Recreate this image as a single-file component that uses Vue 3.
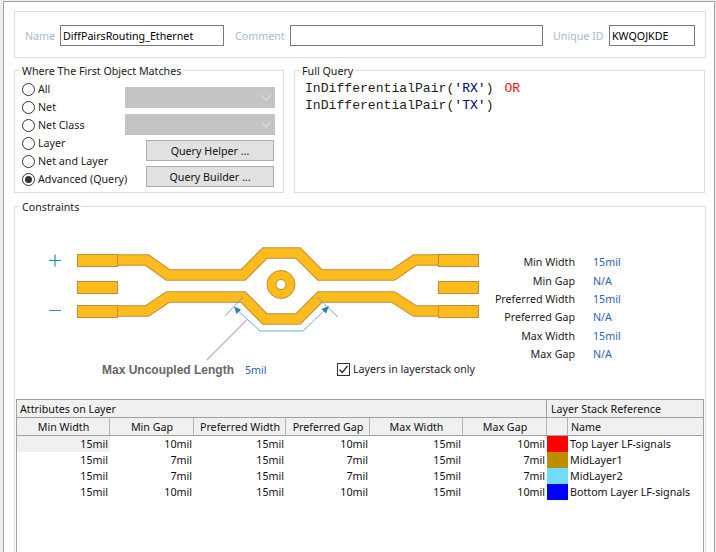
<script setup>
const radios = [
  { label: 'All' },
  { label: 'Net' },
  { label: 'Net Class' },
  { label: 'Layer' },
  { label: 'Net and Layer' },
  { label: 'Advanced (Query)', on: true }
]
const summary = [
  ['Min Width', '15mil'],
  ['Min Gap', 'N/A'],
  ['Preferred Width', '15mil'],
  ['Preferred Gap', 'N/A'],
  ['Max Width', '15mil'],
  ['Max Gap', 'N/A']
]
const columns = ['Min Width', 'Min Gap', 'Preferred Width', 'Preferred Gap', 'Max Width', 'Max Gap']
const rows = [
  { vals: ['15mil', '10mil', '15mil', '10mil', '15mil', '10mil'], color: '#ff0000', name: 'Top Layer LF-signals' },
  { vals: ['15mil', '7mil', '15mil', '7mil', '15mil', '7mil'], color: '#bc8e00', name: 'MidLayer1' },
  { vals: ['15mil', '7mil', '15mil', '7mil', '15mil', '7mil'], color: '#70dbfa', name: 'MidLayer2' },
  { vals: ['15mil', '10mil', '15mil', '10mil', '15mil', '10mil'], color: '#0000ff', name: 'Bottom Layer LF-signals' }
]
const topTrace = 'M118 260H147L168 275H243L265 253H298L320 275H393L415 260H440'
const botTrace = 'M118 311H147L168 297H243L265 319H298L320 297H393L415 311H440'
const pads = [
  [77, 254], [77, 281], [77, 305],
  [438, 254], [438, 281], [438, 305]
]
</script>

<template>
  <div class="window">
    <div class="inner">
      <div class="name-panel">
        <label class="lbl lbl-name">Name</label>
        <input class="field f-name" value="DiffPairsRouting_Ethernet" readonly />
        <label class="lbl lbl-comment">Comment</label>
        <input class="field f-comment" value="" readonly />
        <label class="lbl lbl-id">Unique ID</label>
        <input class="field f-id" value="KWQOJKDE" readonly />
      </div>

      <div class="query-row">
        <fieldset class="group where">
          <legend>Where The First Object Matches</legend>
          <div class="where-body">
            <div class="radios">
              <div v-for="r in radios" :key="r.label" class="radio-row">
                <span class="radio" :class="{ on: r.on }"></span>
                <span>{{ r.label }}</span>
              </div>
            </div>
            <div class="where-controls">
              <div class="combo">
                <svg width="12" height="7" viewBox="0 0 12 7"><path d="M1 1l5 5 5-5" fill="none" stroke="#d9d9d9" stroke-width="1.3" /></svg>
              </div>
              <div class="combo">
                <svg width="12" height="7" viewBox="0 0 12 7"><path d="M1 1l5 5 5-5" fill="none" stroke="#d9d9d9" stroke-width="1.3" /></svg>
              </div>
              <div class="btn first">Query Helper ...</div>
              <div class="btn">Query Builder ...</div>
            </div>
          </div>
        </fieldset>

        <fieldset class="group full">
          <legend>Full Query</legend>
          <div class="code">
            <div>InDifferentialPair(<span class="str">'RX'</span>) <span class="kw">OR</span></div>
            <div>InDifferentialPair(<span class="str">'TX'</span>)</div>
          </div>
        </fieldset>
      </div>

      <fieldset class="group constraints">
        <legend>Constraints</legend>
        <div class="diagram">
          <div class="diagram-left">
            <svg class="pcb" width="440" height="117" viewBox="40 245 440 117">
              <path d="M49 260.5H61M55 254.5V266.5M49 310.5H61" stroke="#2b8cbe" stroke-width="1.2" fill="none" />
              <g fill="none" stroke-linejoin="miter">
                <path :d="topTrace" stroke="#c08c3c" stroke-width="11.5" />
                <path :d="botTrace" stroke="#c08c3c" stroke-width="11.5" />
                <path :d="topTrace" stroke="#fdbb1c" stroke-width="9.5" />
                <path :d="botTrace" stroke="#fdbb1c" stroke-width="9.5" />
              </g>
              <rect v-for="p in pads" :key="p[0] + '-' + p[1]" :x="p[0] + 0.5" :y="p[1] + 0.5" width="40" height="12" fill="#fdbb1c" stroke="#c08c3c" />
              <circle cx="281" cy="284.5" r="14" fill="#fdbb1c" stroke="#c08c3c" />
              <circle cx="281" cy="284.5" r="5" fill="#fff" stroke="#c08c3c" />
              <g fill="none" stroke="#5aa6cc" stroke-width="0.9">
                <path d="M225 316L243 297M317 297L338 317" />
                <path d="M235 308L260 331H303L328 307" />
              </g>
              <path d="M234 306.5L241 309.5L236.5 314Z" fill="#2a7fae" />
              <path d="M329 306L326 313.5L321.5 309Z" fill="#2a7fae" />
              <path d="M246.7 320L206.7 360" stroke="#d0aadc" stroke-width="1.2" />
            </svg>
            <div class="length-row">
              <span class="length-label">Max Uncoupled Length</span>
              <span class="value length-value">5mil</span>
              <span class="check">
                <svg width="13" height="13" viewBox="0 0 13 13"><rect x="0.5" y="0.5" width="12" height="12" fill="#fff" stroke="#333" /><path d="M2.5 6.5L5.2 9.5L10.5 3" fill="none" stroke="#222" stroke-width="1.2" /></svg>
                <span>Layers in layerstack only</span>
              </span>
            </div>
          </div>
          <div class="summary">
            <template v-for="s in summary" :key="s[0]">
              <span class="s-label">{{ s[0] }}</span>
              <span class="value">{{ s[1] }}</span>
            </template>
          </div>
        </div>

        <div class="table">
          <div class="band">
            <div class="band-a">Attributes on Layer</div>
            <div class="band-b">Layer Stack Reference</div>
          </div>
          <div class="grid heads">
            <div v-for="c in columns" :key="c" class="head">{{ c }}</div>
            <div class="head"></div>
            <div class="head head-name">Name</div>
          </div>
          <div v-for="(r, i) in rows" :key="r.name" class="grid row">
            <div v-for="(v, j) in r.vals" :key="j" class="num" :class="{ sel: i === 0 && j === 0 }">{{ v }}</div>
            <div :style="{ background: r.color }"></div>
            <div class="layer-name">{{ r.name }}</div>
          </div>
        </div>
      </fieldset>
    </div>
  </div>
</template>

<style>
html, body { margin: 0; padding: 0; background: #f0f0f0; }
</style>

<style scoped>
.window {
  width: 716px;
  height: 552px;
  box-sizing: border-box;
  padding: 1px 1px 0 3px;
  background: #f0f0f0;
  overflow: hidden;
  font-family: "Noto Sans", "Open Sans", sans-serif;
  font-size: 10.7px;
  color: #1a1a1a;
}
.inner {
  height: 600px;
  box-sizing: border-box;
  border: 1px solid #a0a0a0;
  background: #fff;
  padding: 9px 8px 0 10px;
}
.name-panel {
  display: flex;
  align-items: center;
  height: 47px;
  box-sizing: border-box;
  border: 1px solid #dcdcdc;
  padding: 2px 0 0 10px;
}
.lbl { color: #a9b9cf; }
.lbl-name { width: 35px; }
.lbl-comment { width: 55px; margin-left: 11px; }
.lbl-id { width: 56px; margin-left: 10px; }
.field {
  box-sizing: border-box;
  height: 21px;
  border: 1px solid #7a7a7a;
  padding: 0 2px;
  font: inherit;
  color: #000;
  outline: none;
  background: #fff;
}
.f-name { width: 164px; }
.f-comment { width: 253px; }
.f-id { width: 86px; }

.query-row {
  display: flex;
  gap: 10px;
  margin-top: 5px;
}
.group {
  margin: 0;
  padding: 0;
  min-width: 0;
  border: 1px solid #dcdcdc;
}
.group legend {
  margin-left: 5px;
  padding: 0 2px;
  height: 14px;
  line-height: 16px;
}
.where { width: 270px; height: 130px; box-sizing: border-box; }
.full { width: 411px; height: 130px; box-sizing: border-box; }
.where-body {
  display: flex;
  padding: 3px 0 0 7px;
}
.radios { width: 103px; }
.radio-row {
  display: flex;
  align-items: center;
  gap: 3px;
  height: 18px;
  white-space: nowrap;
}
.radio {
  width: 13px;
  height: 13px;
  box-sizing: border-box;
  border: 1px solid #333;
  border-radius: 50%;
  display: flex;
  align-items: center;
  justify-content: center;
  flex: none;
  background: #fff;
}
.radio.on::after {
  content: "";
  width: 7px;
  height: 7px;
  border-radius: 50%;
  background: #333;
}
.where-controls {
  width: 150px;
  display: flex;
  flex-direction: column;
  align-items: flex-end;
  padding-top: 7px;
}
.combo {
  width: 150px;
  height: 21px;
  margin-bottom: 6px;
  background: #c4c4c4;
  display: flex;
  align-items: center;
  justify-content: flex-end;
  padding-right: 3px;
  box-sizing: border-box;
}
.btn {
  width: 128px;
  height: 21px;
  box-sizing: border-box;
  margin-right: 1px;
  background: #e1e1e1;
  border: 1px solid #adadad;
  display: flex;
  align-items: center;
  justify-content: center;
  color: #111;
  margin-bottom: 5px;
}
.btn.first { margin-top: -1px; }
.code {
  padding: 3px 0 0 10px;
  font-family: "Liberation Mono", monospace;
  font-size: 13.1px;
  line-height: 17px;
  color: #222;
  white-space: pre;
}
.str { color: #000080; }
.kw { color: #f01010; margin-left: 3px; }

.constraints {
  margin-top: 6px;
  height: 360px;
  box-sizing: border-box;
}
.diagram {
  display: flex;
  height: 186px;
}
.diagram-left { width: 465px; padding-top: 32px; box-sizing: border-box; }
.pcb { display: block; margin-left: 25px; }
.length-row {
  display: flex;
  align-items: center;
  height: 16px;
  padding-left: 87px;
  white-space: nowrap;
}
.length-label {
  width: 143px;
  font-family: "Liberation Sans", Arial, sans-serif;
  font-size: 12px;
  font-weight: bold;
  color: #666;
}
.length-value { width: 92px; }
.value { color: #2a63b0; }
.check { display: flex; align-items: center; gap: 3px; margin-top: -2px; }
.check svg { display: block; }
.summary {
  display: grid;
  grid-template-columns: 95px auto;
  column-gap: 18px;
  grid-auto-rows: 18.4px;
  align-items: center;
  align-content: start;
  padding-top: 40px;
  white-space: nowrap;
}
.s-label { text-align: right; }

.table {
  width: 688px;
  margin-left: 1px;
  box-sizing: border-box;
  border: 1px solid #a0a0a0;
  border-bottom: 0;
  height: 170px;
  color: #111;
}
.band {
  display: flex;
  height: 18px;
  box-sizing: border-box;
  background: #f0f0f0;
  border-bottom: 1px solid #a0a0a0;
  line-height: 19px;
}
.band-a { width: 529px; padding-left: 3px; box-sizing: border-box; }
.band-b { flex: 1; padding-left: 4px; border-left: 1px solid #a0a0a0; }
.grid {
  display: grid;
  grid-template-columns: 93px 84px 92px 84px 93px 84px 21px 1fr;
}
.heads {
  height: 18px;
  box-sizing: border-box;
  background: #f0f0f0;
  border-bottom: 1px solid #a0a0a0;
}
.head {
  text-align: center;
  line-height: 19px;
  height: 17px;
  overflow: hidden;
  box-shadow: inset -1px 0 0 #b4b4b4;
  white-space: nowrap;
}
.head-name { text-align: left; padding-left: 3px; box-shadow: none; }
.row { height: 16px; line-height: 16px; }
.num { text-align: right; padding-right: 2px; }
.sel { background: #f0f0f0; }
.layer-name { padding-left: 2px; white-space: nowrap; }
</style>
